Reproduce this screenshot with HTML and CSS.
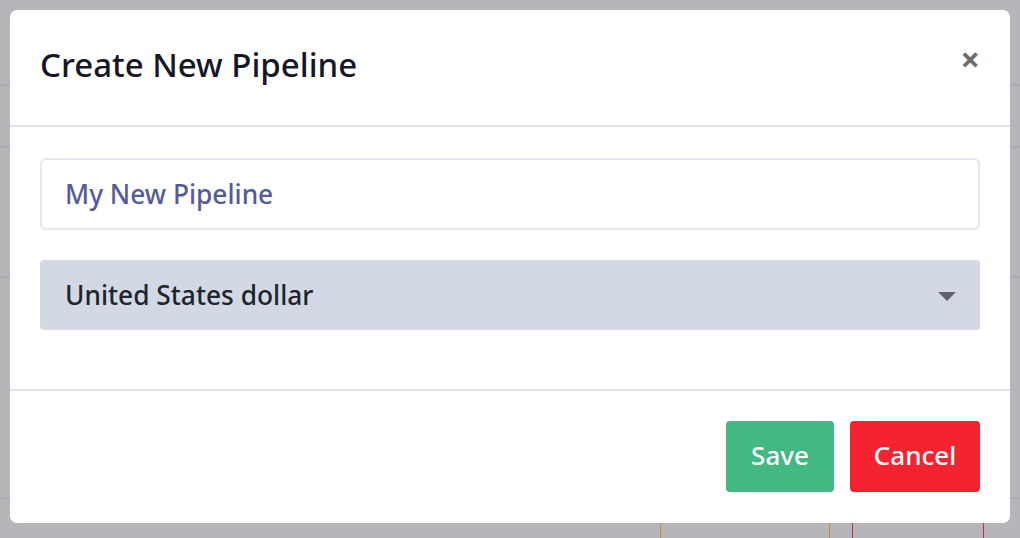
FILE: index.html
```html
<!DOCTYPE html>
<html>
<head>
<meta charset="utf-8">
<link rel="stylesheet" href="styles.css">
</head>
<body>
<div class="backdrop">
  <div class="bg-line l1"></div>
  <div class="bg-line l2"></div>
  <div class="bg-line l3"></div>
  <div class="bg-line l4"></div>
  <div class="bg-btn orange"></div>
  <div class="bg-btn red"></div>
</div>
<div class="modal">
  <div class="modal-header">
    <h1 class="title">Create New Pipeline</h1>
    <span class="close">&times;</span>
  </div>
  <div class="modal-body">
    <div class="input">My New Pipeline</div>
    <div class="select">
      <span>United States dollar</span>
      <span class="caret"></span>
    </div>
  </div>
  <div class="modal-footer">
    <button class="btn save">Save</button>
    <button class="btn cancel">Cancel</button>
  </div>
</div>
</body>
</html>
```
FILE: styles.css
```css
html, body {
  margin: 0;
  padding: 0;
  width: 1020px;
  height: 538px;
  overflow: hidden;
  background: #b6b5ba;
  font-family: "Noto Sans", sans-serif;
}
.backdrop {
  position: absolute;
  inset: 0;
}
.bg-line {
  position: absolute;
  left: 0;
  right: 0;
  height: 2px;
  background: #abaab0;
}
.l1 { top: 84px; }
.l2 { top: 146px; }
.l3 { top: 276px; }
.l4 { top: 497px; }
.bg-btn {
  position: absolute;
  top: 520px;
  height: 40px;
  border: 1px solid;
  border-radius: 4px;
}
.orange { left: 660px; width: 168px; border-color: #c8892a; }
.red { left: 852px; width: 130px; border-color: #c4303a; }

.modal {
  position: absolute;
  left: 10px;
  top: 10px;
  width: 1000px;
  height: 513px;
  background: #fff;
  border-radius: 7px;
  display: flex;
  flex-direction: column;
}
.modal-header {
  height: 115px;
  flex: none;
  border-bottom: 2px solid #dfe2e7;
  display: flex;
  align-items: center;
  justify-content: space-between;
  padding: 0 30px;
  box-sizing: content-box;
}
.title {
  margin: 0;
  margin-top: -6px;
  font-size: 33px;
  font-weight: 500;
  color: #161627;
}
.close {
  font-size: 34px;
  font-weight: 700;
  color: #6d6d6d;
  line-height: 1;
  margin-top: -18px;
}
.modal-body {
  height: 264px;
  flex: none;
  border-bottom: 2px solid #dfe2e7;
  padding: 31px 30px 0;
  box-sizing: border-box;
  display: flex;
  flex-direction: column;
  gap: 30px;
}
.input {
  height: 72px;
  box-sizing: border-box;
  border: 2px solid #e3e7ee;
  border-radius: 6px;
  padding: 0 23px;
  display: flex;
  align-items: center;
  font-size: 26.3px;
  font-weight: 500;
  color: #555b99;
}
.select {
  height: 70px;
  box-sizing: border-box;
  background: #d2d9e5;
  border-radius: 4px;
  padding: 0 25px;
  display: flex;
  align-items: center;
  justify-content: space-between;
  font-size: 26.3px;
  font-weight: 500;
  color: #20242b;
}
.caret {
  width: 0;
  height: 0;
  border-left: 9px solid transparent;
  border-right: 9px solid transparent;
  border-top: 9px solid #5f636b;
  margin-right: -1px;
  margin-top: 2px;
}
.modal-footer {
  flex: 1;
  display: flex;
  justify-content: flex-end;
  align-items: flex-start;
  gap: 16px;
  padding: 30px 30px 0;
}
.btn {
  height: 71px;
  border: none;
  border-radius: 4px;
  color: #fff;
  font-family: inherit;
  font-size: 26px;
  font-weight: 500;
  padding: 0 0 4px;
}
.save { width: 108px; background: #42b883; }
.cancel { width: 130px; background: #f5222f; }
```
